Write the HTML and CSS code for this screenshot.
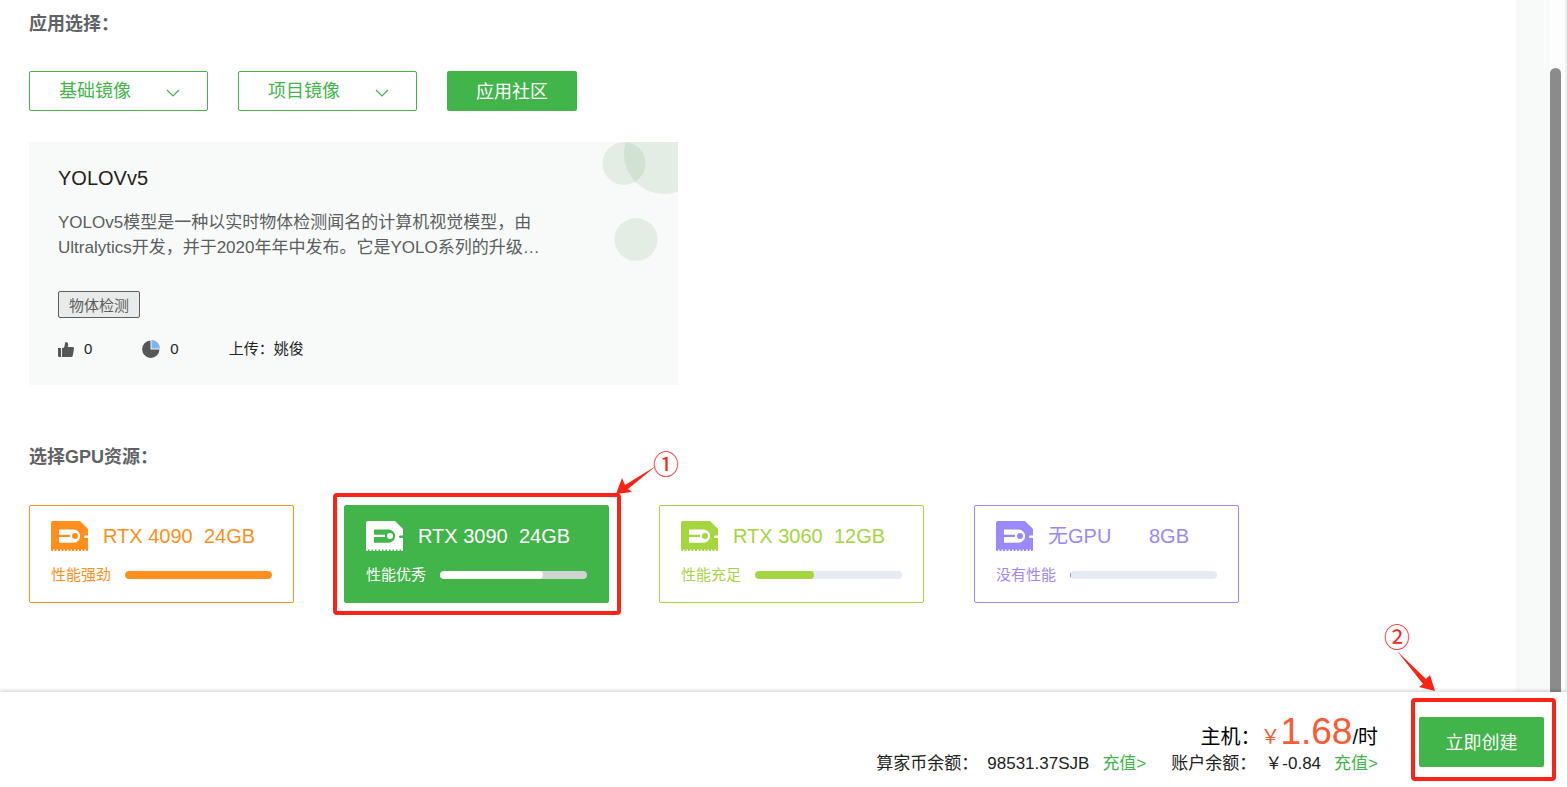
FILE: index.html
```html
<!DOCTYPE html>
<html lang="zh-CN">
<head>
<meta charset="utf-8">
<title>创建实例</title>
<link rel="stylesheet" href="styles.css">
</head>
<body>
<svg class="defs" aria-hidden="true">
  <symbol id="gpu" viewBox="0 0 37 30">
    <path fill="currentColor" fill-rule="evenodd" d="M2 0H29L37 8V14.500H34.500Q33 14.500 33 15.700T34.500 17H37V29Q37 30 36 30H35V28.500H33.500V30H31.500V28.500H30V30H28V28.500H26.500V30H24.500V28.500H23V30H21V28.500H19.500V30H17.500V28.500H16V30H14V28.500H12.500V30H10.500V28.500H9V30H7V28.500H5.500V30H3.500V28.500H2V30H1Q0 30 0 29V2Q0 0 2 0ZM8 8.500V13.700H19V16H8V21.700H22.500A6.600 6.600 0 0 0 22.500 8.500Z"/>
    <circle cx="24" cy="15" r="3" fill="currentColor"/>
  </symbol>
  <symbol id="chevron" viewBox="0 0 14 8">
    <path d="M1 1L7 7L13 1" fill="none" stroke="currentColor" stroke-width="1.200"/>
  </symbol>
</svg>

<div class="scroller">
  <main class="content">
    <h2 class="heading">应用选择：</h2>
    <div class="sources">
      <span class="picker">
        <select class="picker-select" aria-label="基础镜像"><option>基础镜像</option></select>
        <svg class="chevron" aria-hidden="true"><use href="#chevron"/></svg>
      </span>
      <span class="picker">
        <select class="picker-select" aria-label="项目镜像"><option>项目镜像</option></select>
        <svg class="chevron" aria-hidden="true"><use href="#chevron"/></svg>
      </span>
      <button class="community" type="button">应用社区</button>
    </div>

    <article class="app">
      <svg class="bubbles" viewBox="0 0 78 122" aria-hidden="true">
        <g fill="#3c8c3c" fill-opacity="0.110">
          <circle cx="24" cy="21.500" r="21.500"/>
          <circle cx="64" cy="12" r="40"/>
          <circle cx="36" cy="97.500" r="21.500"/>
        </g>
      </svg>
      <h3 class="app-title">YOLOVv5</h3>
      <p class="app-text">YOLOv5模型是一种以实时物体检测闻名的计算机视觉模型，由Ultralytics开发，并于2020年年中发布。它是YOLO系列的升级…</p>
      <span class="tag">物体检测</span>
      <div class="stats">
        <span class="stat">
          <svg class="thumb" viewBox="0 0 16 15" aria-hidden="true"><path fill="#535756" d="M0 6H3V15H1Q0 15 0 14ZM4 6H5.500Q7 4 7 1Q7 0 8.200 0Q10.200 0 10.200 2.500Q10.200 4 9.700 5H15Q16 5 16 6.500L14.800 13.500Q14.500 15 13 15H4Z"/></svg>
          <span>0</span>
        </span>
        <span class="stat">
          <svg class="pie" viewBox="0 0 18 18" aria-hidden="true"><path fill="#535756" d="M8.500 .5A8.700 8.700 0 1 0 17.500 9.500H8.500Z"/><path fill="#7fb4f0" d="M9.500 0A8.500 8.500 0 0 1 18 8.500H9.500Z"/></svg>
          <span>0</span>
        </span>
        <span>上传：姚俊</span>
      </div>
    </article>

    <h2 class="heading">选择GPU资源：</h2>
    <div class="gpus">
      <button class="gpu orange" type="button">
        <span class="gpu-top"><svg class="gpu-icon" aria-hidden="true"><use href="#gpu"/></svg><span class="gpu-name">RTX 4090</span><span>24GB</span></span>
        <span class="gpu-power"><span>性能强劲</span><span class="bar"><span class="fill" style="width:100%"></span></span></span>
      </button>
      <div class="marked">
        <button class="gpu selected" type="button" aria-pressed="true">
          <span class="gpu-top"><svg class="gpu-icon" aria-hidden="true"><use href="#gpu"/></svg><span class="gpu-name">RTX 3090</span><span>24GB</span></span>
          <span class="gpu-power"><span>性能优秀</span><span class="bar"><span class="fill" style="width:70%"></span></span></span>
        </button>
        <span class="frame frame-gpu"></span>
        <svg class="arrow arrow-gpu" viewBox="0 0 42 30" aria-hidden="true"><path fill="#fb2315" d="M1 29L7 13L10 20L41 1L13 24L17 27Z"/></svg>
        <span class="step step-gpu">①</span>
      </div>
      <button class="gpu lime" type="button">
        <span class="gpu-top"><svg class="gpu-icon" aria-hidden="true"><use href="#gpu"/></svg><span class="gpu-name">RTX 3060</span><span>12GB</span></span>
        <span class="gpu-power"><span>性能充足</span><span class="bar"><span class="fill" style="width:40%"></span></span></span>
      </button>
      <button class="gpu violet" type="button">
        <span class="gpu-top"><svg class="gpu-icon" aria-hidden="true"><use href="#gpu"/></svg><span class="gpu-name">无GPU</span><span>8GB</span></span>
        <span class="gpu-power"><span>没有性能</span><span class="bar"><span class="fill" style="width:1%"></span></span></span>
      </button>
    </div>
  </main>
  <div class="gutter"></div>
  <div class="track"><div class="thumb-bar"></div></div>
</div>

<footer class="checkout">
  <div class="summary">
    <div class="price"><span>主机：</span><span class="amount"><span>￥</span><span class="number">1.68</span></span><span>/时</span></div>
    <div class="balances">
      <span class="balance"><span>算家币余额：</span><span>98531.37SJB</span><a class="recharge" href="#coin">充值&gt;</a></span>
      <span class="balance"><span>账户余额：</span><span>￥-0.84</span><a class="recharge" href="#account">充值&gt;</a></span>
    </div>
  </div>
  <div class="marked">
    <button class="create" type="button">立即创建</button>
    <span class="frame frame-create"></span>
    <svg class="arrow arrow-create" viewBox="0 0 40 42" aria-hidden="true"><path fill="#fb2315" d="M1 1L30 29L34 25L39 41L23 37L27 34Z"/></svg>
    <span class="step step-create">②</span>
  </div>
</footer>
</body>
</html>
```
FILE: styles.css
```css
* { box-sizing: border-box; }

body {
  margin: 0;
  height: 100vh;
  display: flex;
  flex-direction: column;
  overflow: hidden;
  background: #fff;
  color: #222;
  font-family: "Liberation Sans", "Noto Sans CJK SC", sans-serif;
}

button, select { font-family: inherit; cursor: pointer; }
.defs { position: absolute; width: 0; height: 0; }

.scroller { flex: 1; min-height: 0; display: flex; }
.content { flex: 1; padding: 11px 29px 0; }
.gutter { width: 34px; background: #f8faf9; }
.track {
  width: 17px;
  padding-top: 68px;
  display: flex;
  background: #fdfdfd;
  border-right: 2px solid #efefef;
}
.thumb-bar { width: 11px; border-radius: 6px 6px 0 0; background: #8b8b8b; }

.heading {
  margin: 0;
  font-size: 18px;
  line-height: 26px;
  font-weight: 700;
  color: #606266;
}

.sources { display: flex; gap: 30px; margin: 34px 0 31px; }
.picker { position: relative; color: #41b549; }
.picker-select {
  appearance: none;
  width: 179px;
  height: 40px;
  padding: 0 29px;
  border: 1px solid #41b549;
  border-radius: 2px;
  background: #fff;
  color: #41b549;
  font-size: 18px;
}
.chevron {
  position: absolute;
  right: 28px;
  top: 18px;
  width: 14px;
  height: 8px;
  pointer-events: none;
}
.community {
  height: 40px;
  padding: 0 29px 3px;
  border: 0;
  border-radius: 2px;
  background: #41b549;
  color: #fff;
  font-size: 18px;
}

.app {
  position: relative;
  max-width: 649px;
  margin-bottom: 59px;
  padding: 24px 120px 24px 29px;
  background: #f8faf9;
}
.bubbles { position: absolute; top: 0; right: 0; width: 78px; height: 122px; }
.app-title { margin: 0 0 20px; font-size: 20px; line-height: 24px; font-weight: 400; }
.app-text { margin: 0 0 31px; font-size: 17px; line-height: 25px; color: #5a5e5d; }
.tag {
  display: inline-flex;
  align-items: center;
  height: 27px;
  padding: 0 10px;
  border: 1px solid #5a5e5d;
  border-radius: 2px;
  background: #e9ebea;
  color: #5a5e5d;
  font-size: 15px;
}
.stats { display: flex; align-items: center; margin-top: 19px; font-size: 15px; line-height: 24px; }
.stat { display: flex; align-items: center; gap: 10px; margin-right: 50px; }
.thumb { width: 16px; height: 15px; }
.pie { width: 18px; height: 18px; }

.gpus { display: flex; gap: 50px; margin-top: 35px; }
.marked { position: relative; }
.gpu {
  width: 265px;
  height: 98px;
  padding: 15px 21px;
  display: flex;
  flex-direction: column;
  gap: 13px;
  border: 1px solid currentColor;
  border-radius: 2px;
  background: #fff;
  text-align: left;
}
.orange { color: #ff8f1c; }
.selected { background: #41b549; border-color: #41b549; color: #fff; }
.lime { color: #a5d63f; }
.violet { color: #9b89fb; }
.gpu-top { display: flex; align-items: center; font-size: 20px; line-height: 30px; }
.gpu-icon { width: 37px; height: 30px; margin-right: 15px; }
.gpu-name { width: 101px; }
.gpu-power { display: flex; align-items: center; gap: 14px; font-size: 15px; line-height: 22px; }
.bar { flex: 1; height: 8px; border-radius: 4px; background: #e6eaf4; overflow: hidden; }
.selected .bar { background: #d0d3d0; }
.fill { display: block; height: 8px; border-radius: 4px; background: currentColor; }

.frame { position: absolute; border: 4px solid #fb2315; border-radius: 4px; pointer-events: none; }
.frame-gpu { inset: -12px -12px -12px -11px; }
.frame-create { inset: -19px -12px -14px -8px; }
.arrow { position: absolute; }
.arrow-gpu { left: 271px; top: -40px; width: 42px; height: 30px; }
.arrow-create { left: -23px; top: -67px; width: 40px; height: 42px; }
.step {
  position: absolute;
  width: 28px;
  color: #fb2315;
  font-family: "Noto Sans CJK SC", sans-serif;
  font-size: 26px;
  line-height: 28px;
  text-align: center;
}
.step-gpu { left: 308px; top: -56px; }
.step-create { left: -36px; top: -95px; }

.checkout {
  position: relative;
  display: flex;
  justify-content: flex-end;
  align-items: flex-start;
  gap: 41px;
  min-height: 95px;
  padding: 25px 23px 0 0;
  background: #fff;
  box-shadow: 0 -1px 4px rgba(0, 0, 0, 0.2);
}
.summary { display: flex; flex-direction: column; align-items: flex-end; }
.price { display: flex; align-items: baseline; height: 34px; font-size: 20px; line-height: 30px; color: #000; }
.amount { display: flex; align-items: baseline; color: #fc5a32; }
.number { font-size: 37px; }
.balances { display: flex; gap: 25px; font-size: 17px; line-height: 26px; }
.balance { display: flex; }
.balance > span + span { margin-left: 9px; }
.recharge { margin-left: 13px; color: #41b549; text-decoration: none; }
.create {
  width: 125px;
  height: 50px;
  padding: 0 0 3px;
  border: 0;
  border-radius: 2px;
  background: #41b549;
  color: #fff;
  font-size: 18px;
}
```
